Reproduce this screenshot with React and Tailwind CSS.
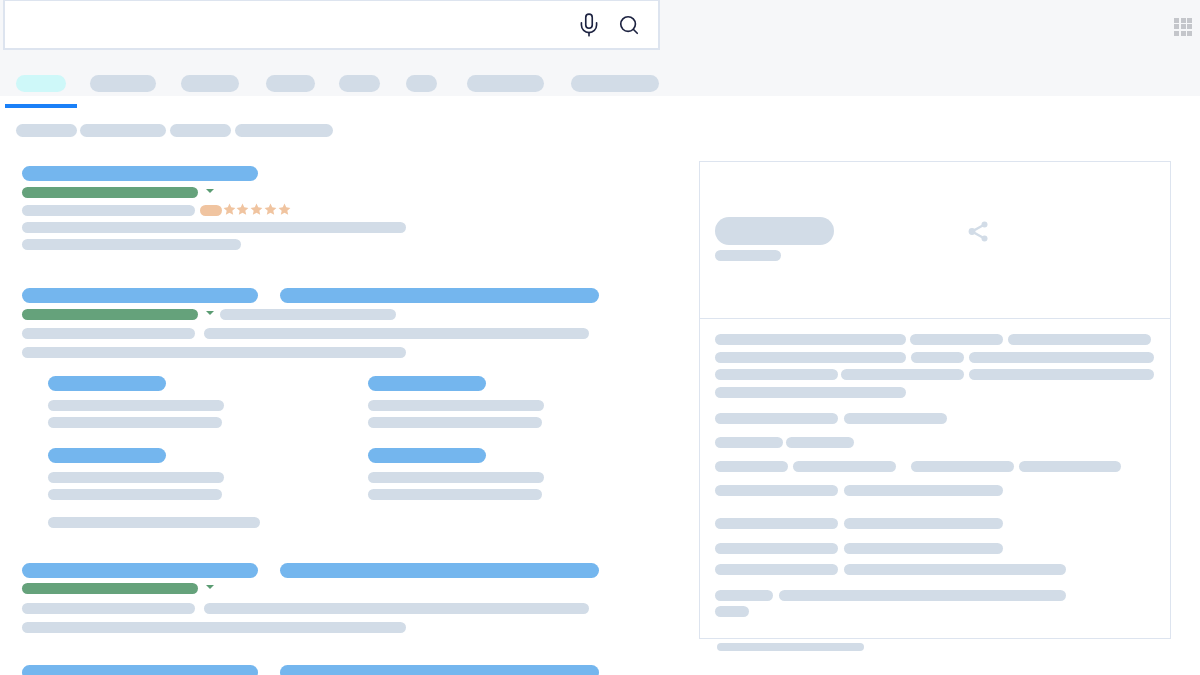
import { Mic, Search } from 'lucide-react';

function Bar({ h = 'h-[11px]', className = '' }) {
  return <div className={`shrink-0 rounded-full bg-[#d2dce7] ${h} ${className}`} />;
}

function Link({ className = '' }) {
  return <div className={`shrink-0 rounded-full bg-[#74b6ee] h-[15px] ${className}`} />;
}

function Url() {
  return <div className="shrink-0 rounded-full bg-[#65a27b] h-[11px] w-[176px]" />;
}

function Caret({ className = '' }) {
  return <div className={`shrink-0 w-0 h-0 border-x-[4px] border-x-transparent border-t-[4.5px] border-t-[#5a9c72] ${className}`} />;
}

function Star() {
  return (
    <svg viewBox="0 0 24 24" className="w-[13px] h-[13px] shrink-0 fill-[#f0c4a0]">
      <polygon points="12,1 15.2,8 22.9,9 17.2,14.2 18.8,21.8 12,18 5.2,21.8 6.8,14.2 1.1,9 8.8,8" />
    </svg>
  );
}

function AppsGrid() {
  return (
    <div className="grid grid-cols-3 gap-[1.5px] w-[18px] self-start mt-[17.5px] mr-[8px]">
      {Array.from({ length: 9 }).map((_, i) => (
        <div key={i} className="h-[5px] w-[5px] bg-[#c4c6cb]" />
      ))}
    </div>
  );
}

function ShareIcon() {
  return (
    <svg viewBox="0 0 21 21" className="w-[21px] h-[21px] fill-[#d2dce7] stroke-[#d2dce7]">
      <circle cx="16.5" cy="3.5" r="3" stroke="none" />
      <circle cx="4" cy="10.5" r="3.4" stroke="none" />
      <circle cx="16.5" cy="17.5" r="3" stroke="none" />
      <path d="M16.5 3.5 L4 10.5 L16.5 17.5" fill="none" strokeWidth="2.4" />
    </svg>
  );
}

function Header() {
  return (
    <header className="h-[96px] bg-[#f6f7f9]">
      <div className="flex justify-between">
        <div className="ml-[3px] w-[657px] h-[50px] bg-white border-2 border-t border-[#dde4ef] flex items-start justify-end gap-[16px] pr-[18px] pt-[11px]">
          <Mic className="w-[26px] h-[26px] text-[#1c2240]" strokeWidth={1.5} />
          <Search className="w-[22px] h-[22px] mt-[2px] text-[#1c2240]" strokeWidth={1.8} />
        </div>
        <AppsGrid />
      </div>
      <nav className="flex mt-[25px] pl-[16px] h-[17px]">
        <div className="rounded-full h-[17px] w-[50px] bg-[#cef8f9]" />
        <Bar h="h-[17px]" className="w-[66px] ml-[24px]" />
        <Bar h="h-[17px]" className="w-[58px] ml-[25px]" />
        <Bar h="h-[17px]" className="w-[49px] ml-[27px]" />
        <Bar h="h-[17px]" className="w-[41px] ml-[24px]" />
        <Bar h="h-[17px]" className="w-[31px] ml-[26px]" />
        <Bar h="h-[17px]" className="w-[77px] ml-[30px]" />
        <Bar h="h-[17px]" className="w-[88px] ml-[27px]" />
      </nav>
    </header>
  );
}

function Results() {
  return (
    <section className="w-[699px] shrink-0 pl-[22px]">
      {/* first result */}
      <Link className="w-[236px] mt-[5px]" />
      <div className="flex items-start mt-[6px]">
        <Url />
        <Caret className="ml-[8px] mt-[2px]" />
      </div>
      <div className="flex items-center h-[11px] mt-[7px]">
        <Bar className="w-[173px]" />
        <div className="shrink-0 rounded-full bg-[#f0c4a0] h-[11px] w-[22px] ml-[5px]" />
        <div className="flex gap-[0.7px] ml-[0.8px] mb-[3px]">
          <Star />
          <Star />
          <Star />
          <Star />
          <Star />
        </div>
      </div>
      <Bar className="w-[384px] mt-[6px]" />
      <Bar className="w-[219px] mt-[6px]" />

      {/* second result */}
      <div className="flex gap-[22px] mt-[37.5px]">
        <Link className="w-[236px]" />
        <Link className="w-[319px]" />
      </div>
      <div className="flex items-start mt-[6px]">
        <Url />
        <Caret className="ml-[8px] mt-[2px]" />
        <Bar className="w-[176px] ml-[6px]" />
      </div>
      <div className="flex gap-[9px] mt-[8.5px]">
        <Bar className="w-[173px]" />
        <Bar className="w-[385px]" />
      </div>
      <Bar className="w-[384px] mt-[8px]" />

      {/* sitelinks */}
      <div className="grid grid-cols-[320px_1fr] pl-[26px] mt-[18px]">
        <div>
          <Link className="w-[118px]" />
          <Bar className="w-[176px] mt-[9px]" />
          <Bar className="w-[174px] mt-[6px]" />
        </div>
        <div>
          <Link className="w-[118px]" />
          <Bar className="w-[176px] mt-[9px]" />
          <Bar className="w-[174px] mt-[6px]" />
        </div>
        <div className="mt-[20px]">
          <Link className="w-[118px]" />
          <Bar className="w-[176px] mt-[9px]" />
          <Bar className="w-[174px] mt-[6px]" />
        </div>
        <div className="mt-[20px]">
          <Link className="w-[118px]" />
          <Bar className="w-[176px] mt-[9px]" />
          <Bar className="w-[174px] mt-[6px]" />
        </div>
      </div>
      <Bar className="w-[212px] ml-[26px] mt-[17px]" />

      {/* third result */}
      <div className="flex gap-[22px] mt-[35px]">
        <Link className="w-[236px]" />
        <Link className="w-[319px]" />
      </div>
      <div className="flex items-start mt-[5px]">
        <Url />
        <Caret className="ml-[8px] mt-[2px]" />
      </div>
      <div className="flex gap-[9px] mt-[9px]">
        <Bar className="w-[173px]" />
        <Bar className="w-[385px]" />
      </div>
      <Bar className="w-[384px] mt-[8px]" />

      {/* fourth result, cut by the window */}
      <div className="flex gap-[22px] mt-[32px]">
        <Link className="w-[236px]" />
        <Link className="w-[319px]" />
      </div>
    </section>
  );
}

function Panel() {
  return (
    <aside className="w-[472px] shrink-0">
      <div className="h-[478px] border-[1.5px] border-[#dde4ef]">
        <div className="h-[157px] border-b-[1.5px] border-[#dde4ef] px-[14.5px] pt-[54.5px] flex justify-between">
          <div>
            <div className="w-[119px] h-[28px] rounded-[14px] bg-[#d2dce7]" />
            <Bar className="w-[66px] mt-[5px]" />
          </div>
          <div className="mr-[167px] mt-[4px]">
            <ShareIcon />
          </div>
        </div>
        <div className="px-[14.5px] pt-[15px]">
          <div className="flex">
            <Bar className="w-[191px]" />
            <Bar className="w-[93px] ml-[4px]" />
            <Bar className="w-[143px] ml-[5px]" />
          </div>
          <div className="flex mt-[7px]">
            <Bar className="w-[191px]" />
            <Bar className="w-[53px] ml-[5px]" />
            <Bar className="w-[185px] ml-[5px]" />
          </div>
          <div className="flex mt-[6px]">
            <Bar className="w-[123px]" />
            <Bar className="w-[123px] ml-[3px]" />
            <Bar className="w-[185px] ml-[5px]" />
          </div>
          <Bar className="w-[191px] mt-[7px]" />
          <div className="flex mt-[15px]">
            <Bar className="w-[123px]" />
            <Bar className="w-[103px] ml-[6px]" />
          </div>
          <div className="flex mt-[13px]">
            <Bar className="w-[68px]" />
            <Bar className="w-[68px] ml-[3px]" />
          </div>
          <div className="flex mt-[13px]">
            <Bar className="w-[73px]" />
            <Bar className="w-[103px] ml-[5px]" />
            <Bar className="w-[103px] ml-[15px]" />
            <Bar className="w-[102px] ml-[5px]" />
          </div>
          <div className="flex mt-[13px]">
            <Bar className="w-[123px]" />
            <Bar className="w-[159px] ml-[6px]" />
          </div>
          <div className="flex mt-[22px]">
            <Bar className="w-[123px]" />
            <Bar className="w-[159px] ml-[6px]" />
          </div>
          <div className="flex mt-[14px]">
            <Bar className="w-[123px]" />
            <Bar className="w-[159px] ml-[6px]" />
          </div>
          <div className="flex mt-[10px]">
            <Bar className="w-[123px]" />
            <Bar className="w-[222px] ml-[6px]" />
          </div>
          <div className="flex mt-[15px]">
            <Bar className="w-[58px]" />
            <Bar className="w-[287px] ml-[6px]" />
          </div>
          <Bar className="w-[34px] mt-[5px]" />
        </div>
      </div>
      <Bar h="h-[8px]" className="w-[147px] ml-[18px] mt-[4px]" />
    </aside>
  );
}

export default function App() {
  return (
    <div className="h-[675px] w-[1200px] overflow-hidden bg-white">
      <Header />
      <div className="ml-[5px] mt-[7.5px] w-[72px] h-[4px] bg-[#1a80f8]" />
      <div className="flex pl-[16px] mt-[16.5px]">
        <Bar h="h-[13px]" className="w-[61px]" />
        <Bar h="h-[13px]" className="w-[86px] ml-[3px]" />
        <Bar h="h-[13px]" className="w-[61px] ml-[4px]" />
        <Bar h="h-[13px]" className="w-[98px] ml-[4px]" />
      </div>
      <div className="flex mt-[24px]">
        <Results />
        <Panel />
      </div>
    </div>
  );
}
